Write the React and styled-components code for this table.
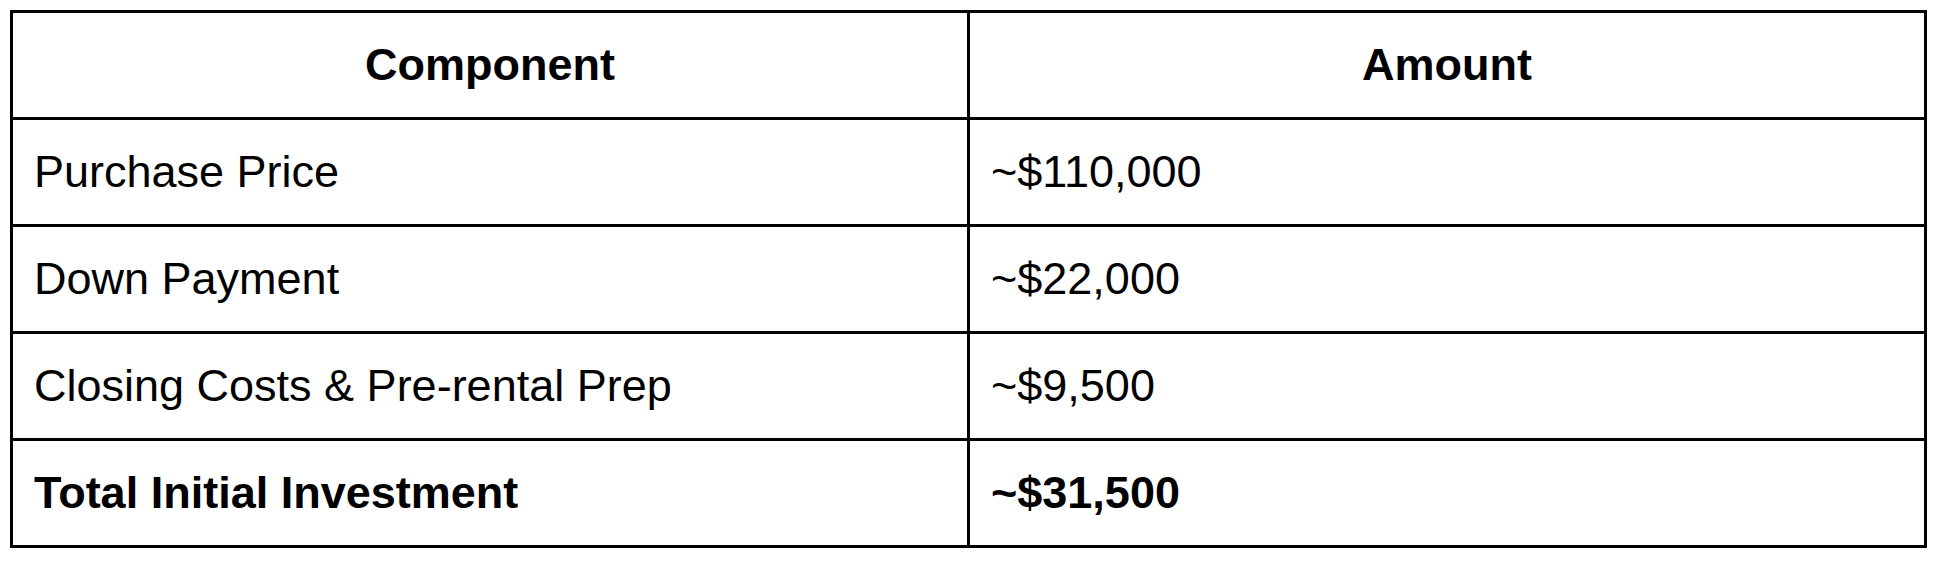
import React from 'react';
import styled, { createGlobalStyle } from 'styled-components';

const GlobalStyle = createGlobalStyle`
    html,
    body {
        margin: 0;
        padding: 0;
        background: #ffffff;
    }
`;

const Page = styled.div`
    padding: 10px 11px 0 10px;
    font-family: 'Liberation Sans', Arial, sans-serif;
    color: #000000;
`;

const Table = styled.table`
    width: 100%;
    border-collapse: collapse;
    table-layout: fixed;
    border: 3px solid #000000;
`;

const HeadCell = styled.th`
    height: 104px;
    padding: 0 21px;
    border: 3px solid #000000;
    font-size: 45px;
    font-weight: 700;
    text-align: center;
    vertical-align: middle;
`;

const Cell = styled.td`
    height: 104px;
    padding: 0 21px;
    border: 3px solid #000000;
    font-size: 45px;
    font-weight: ${(props) => (props.$bold ? 700 : 400)};
    text-align: left;
    vertical-align: middle;
    white-space: nowrap;
`;

const rows = [
    { component: 'Purchase Price', amount: '~$110,000' },
    { component: 'Down Payment', amount: '~$22,000' },
    { component: 'Closing Costs & Pre-rental Prep', amount: '~$9,500' },
    { component: 'Total Initial Investment', amount: '~$31,500', total: true },
];

const App = () => {
    return (
        <Page>
            <GlobalStyle />
            <Table>
                <thead>
                    <tr>
                        <HeadCell>Component</HeadCell>
                        <HeadCell>Amount</HeadCell>
                    </tr>
                </thead>
                <tbody>
                    {rows.map((row) => (
                        <tr key={row.component}>
                            <Cell $bold={row.total}>{row.component}</Cell>
                            <Cell $bold={row.total}>{row.amount}</Cell>
                        </tr>
                    ))}
                </tbody>
            </Table>
        </Page>
    );
};

export default App;
